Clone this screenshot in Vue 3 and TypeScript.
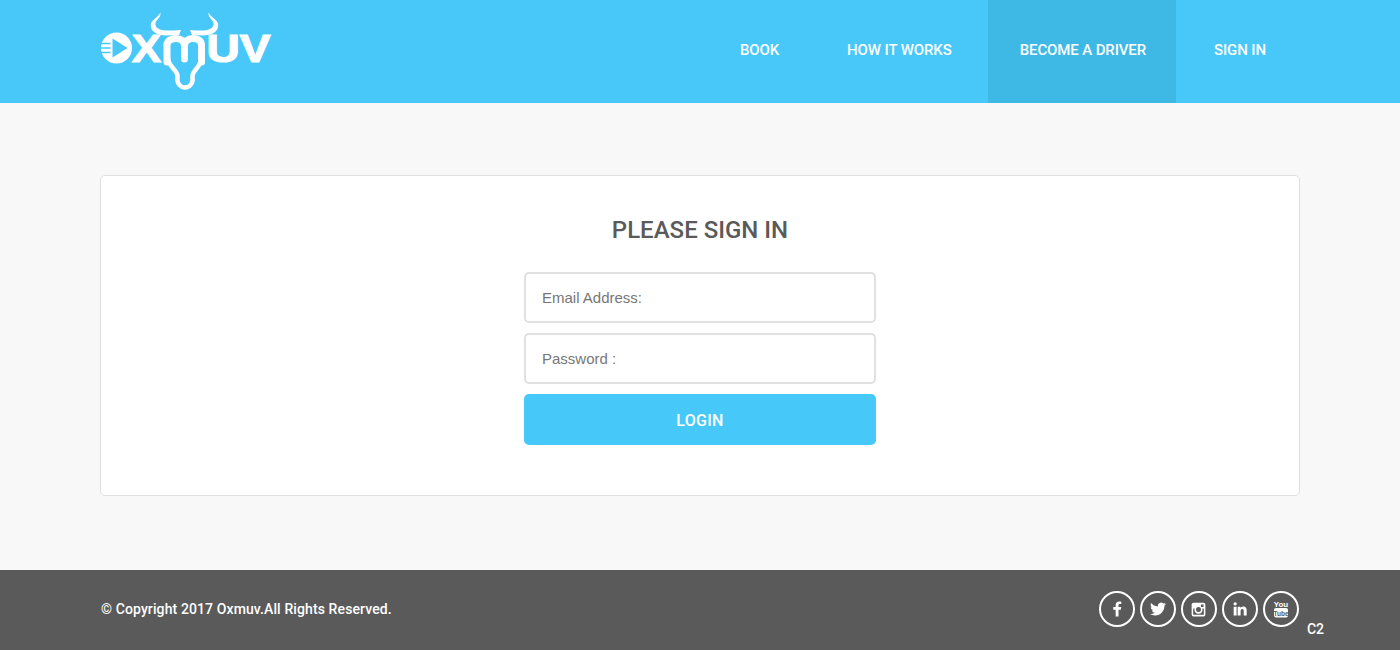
<template>
  <div class="page">
    <header class="header">
      <a class="logo" href="#" aria-label="Oxmuv">
        <svg width="172" height="82" viewBox="100 10 172 82">
          <circle cx="116.5" cy="48" r="15.5" fill="#fff" />
          <path d="M112.500 38.500L127.500 48L112.500 57.500z" fill="#48c8f8" />
          <path d="M101 43.500h9.500M101 48h9.500M101 52.500h9.500" stroke="#48c8f8" stroke-width="1.4" />
          <text x="132" y="62" class="logo-text" textLength="29" lengthAdjust="spacingAndGlyphs">X</text>
          <text x="206.500" y="62" class="logo-text" textLength="64" lengthAdjust="spacingAndGlyphs">UV</text>
          <!-- horns -->
          <path d="M160.500 12.500C161 17 157.500 19 156 21.500C154 25.500 157 29 162 30C167 31 172 30.500 181 30L179 35L165 35.500C155 35 149.500 30 151 23.500C152 19.500 158.500 17 160.500 12.500z" fill="#fff" />
          <path d="M208.500 12.500C208 17 211.500 19 213 21.500C215 25.500 212 29 207 30C202 31 197 30.500 190 30L192 35L204 35.500C214 35 219.500 30 218 23.500C217 19.500 210.500 17 208.500 12.500z" fill="#fff" />
          <!-- m and head -->
          <path d="M167 62V45C167 40.500 172 38.500 176 38.500C181 38.500 184.500 41 184.500 46V59M184.500 46C184.500 41 188 38.500 193 38.500C197.500 38.500 201.500 40.500 201.500 45V62" fill="none" stroke="#fff" stroke-width="7" stroke-linecap="round" />
          <path d="M168 58C168 67 178.500 70 177.500 77C176.500 84 181 87.500 185 87.500C189 87.500 193.500 84 192.500 77C191.500 70 202 67 201 58" fill="none" stroke="#fff" stroke-width="4.500" />
        </svg>
      </a>
      <nav class="nav">
        <a v-for="item in navItems" :key="item" href="#" class="nav-item" :class="{ active: item === 'BECOME A DRIVER' }">{{ item }}</a>
      </nav>
    </header>

    <main class="main">
      <section class="card">
        <h1 class="title">PLEASE SIGN IN</h1>
        <form class="form" @submit.prevent>
          <input class="field" type="email" placeholder="Email Address:" />
          <input class="field" type="password" placeholder="Password :" />
          <button class="login" type="submit">LOGIN</button>
        </form>
      </section>
    </main>

    <footer class="footer">
      <p class="copyright">© Copyright 2017 Oxmuv.All Rights Reserved.</p>
      <div class="socials">
        <a href="#" class="social" aria-label="Facebook">
          <svg width="18" height="18" viewBox="0 0 24 24"><path d="M14 22v-9h3.100l.5-3.600H14V7.200c0-1 .3-1.800 1.800-1.800h1.900V2.200c-.3 0-1.400-.2-2.800-.2-2.800 0-4.700 1.700-4.700 4.800v2.600H7V13h3.200v9z" /></svg>
        </a>
        <a href="#" class="social" aria-label="Twitter">
          <svg width="16" height="16" viewBox="0 0 24 24"><path d="M23.950 4.570a10 10 0 0 1-2.820.77 4.960 4.960 0 0 0 2.160-2.720c-.95.55-2 .95-3.120 1.180a4.920 4.920 0 0 0-8.380 4.480C7.690 8.100 4.070 6.130 1.640 3.160a4.820 4.820 0 0 0-.67 2.480c0 1.710.87 3.210 2.190 4.100a4.900 4.900 0 0 1-2.230-.62v.06a4.920 4.920 0 0 0 3.950 4.830 5 5 0 0 1-2.210.08 4.940 4.940 0 0 0 4.600 3.420A9.870 9.870 0 0 1 0 19.540a14 14 0 0 0 7.560 2.210c9.050 0 14-7.500 14-13.980 0-.21 0-.42-.02-.63a9.940 9.940 0 0 0 2.460-2.550z" /></svg>
        </a>
        <a href="#" class="social" aria-label="Instagram">
          <svg width="15" height="15" viewBox="0 0 24 24"><path fill-rule="evenodd" d="M4 1h16a3 3 0 0 1 3 3v16a3 3 0 0 1-3 3H4a3 3 0 0 1-3-3V4a3 3 0 0 1 3-3zM16 4v4h4V4zM3.500 10.500V20a.5.5 0 0 0 .5.5h16a.5.5 0 0 0 .5-.5v-9.500h-2.300a6.500 6.500 0 1 1-12.400 0zM12 8a4 4 0 1 0 0 8 4 4 0 0 0 0-8z" /></svg>
        </a>
        <a href="#" class="social" aria-label="LinkedIn">
          <svg width="16" height="16" viewBox="0 0 24 24"><path d="M6.900 8.500H2.500v13.300h4.400zM4.700 1.800a2.500 2.500 0 1 0 0 5 2.500 2.500 0 0 0 0-5zM22 21.800h-4.400v-6.500c0-1.600-.4-3.200-2.200-3.200s-2.500 1.500-2.500 3.200v6.500H8.500V8.500h4.200v1.800h.1c.6-1.100 2-2.200 4-2.200 4.200 0 5.200 2.700 5.200 6.300z" /></svg>
        </a>
        <a href="#" class="social" aria-label="YouTube">
          <svg width="16" height="18" viewBox="0 0 16 18">
            <text x="8" y="7" class="yt-you">You</text>
            <rect x="1" y="8" width="14" height="9.500" rx="2" />
            <text x="8" y="15.500" class="yt-tube">Tube</text>
          </svg>
        </a>
      </div>
      <span class="code">C2</span>
    </footer>
  </div>
</template>

<script setup lang="ts">
const navItems: string[] = ['BOOK', 'HOW IT WORKS', 'BECOME A DRIVER', 'SIGN IN']
</script>

<style>
body {
  background: #f8f8f8;
}
</style>

<style scoped>
.page {
  display: flex;
  flex-direction: column;
  min-height: 650px;
  font-family: Roboto, "Liberation Sans", sans-serif;
}

.header {
  display: flex;
  justify-content: space-between;
  height: 103px;
  padding: 0 104px 0 100px;
  background: #48c8f8;
}

.logo {
  display: block;
  margin-top: 10px;
  height: 82px;
}

.logo-text {
  font-family: "Liberation Sans", sans-serif;
  font-size: 38px;
  font-weight: 700;
  fill: #fff;
  stroke: #fff;
  stroke-width: 1.2px;
}

.nav {
  display: flex;
  gap: 6px;
}

.nav-item {
  display: flex;
  align-items: center;
  padding: 0 30px 4px 32px;
  color: #fff;
  font-size: 15px;
  font-weight: 500;
  letter-spacing: -0.12px;
  text-decoration: none;
}

.nav-item.active {
  background: #3eb9e5;
}

.main {
  flex: 1;
  padding: 72px 100px 74px;
}

.card {
  box-sizing: border-box;
  height: 321px;
  padding: 38px 0 0;
  background: #fff;
  border: 1px solid #e0e0e0;
  border-radius: 5px;
}

.title {
  margin: 0 0 26px;
  color: #5a5a5a;
  font-size: 24px;
  font-weight: 500;
  line-height: 32px;
  text-align: center;
}

.form {
  display: flex;
  flex-direction: column;
  gap: 10px;
  width: 352px;
  margin: 0 auto;
}

.field {
  box-sizing: border-box;
  height: 51px;
  padding: 0 16px;
  background: #fff;
  border: 2px solid #e0e0e0;
  border-radius: 5px;
  color: #555;
  font-family: "Liberation Sans", sans-serif;
  font-size: 15px;
  outline: none;
}

.field::placeholder {
  color: #777;
  opacity: 1;
}

.login {
  height: 51px;
  padding: 1px 0 0;
  background: #46c8f8;
  border: 0;
  border-radius: 5px;
  color: #fff;
  font-family: Roboto, sans-serif;
  font-size: 16px;
  font-weight: 500;
  letter-spacing: 0.3px;
}

.footer {
  display: flex;
  align-items: center;
  height: 80px;
  padding: 0 76px 0 101px;
  background: #5a5a5a;
  color: #fff;
}

.copyright {
  flex: 1;
  margin: 0 0 2px;
  font-size: 14px;
  font-weight: 500;
  letter-spacing: 0.11px;
}

.socials {
  display: flex;
  gap: 5px;
  margin: 0 8px 2px 0;
}

.social {
  display: flex;
  align-items: center;
  justify-content: center;
  box-sizing: border-box;
  width: 36px;
  height: 36px;
  border: 2px solid #fff;
  border-radius: 50%;
}

.social svg {
  fill: #fff;
}

.yt-you {
  font-family: "Liberation Sans", sans-serif;
  font-size: 8px;
  font-weight: 700;
  text-anchor: middle;
  fill: #fff;
}

.yt-tube {
  font-family: "Liberation Sans", sans-serif;
  font-size: 6.500px;
  font-weight: 700;
  text-anchor: middle;
  fill: #5a5a5a;
}

.code {
  align-self: flex-end;
  margin-bottom: 13px;
  font-size: 14px;
  font-weight: 500;
}
</style>
